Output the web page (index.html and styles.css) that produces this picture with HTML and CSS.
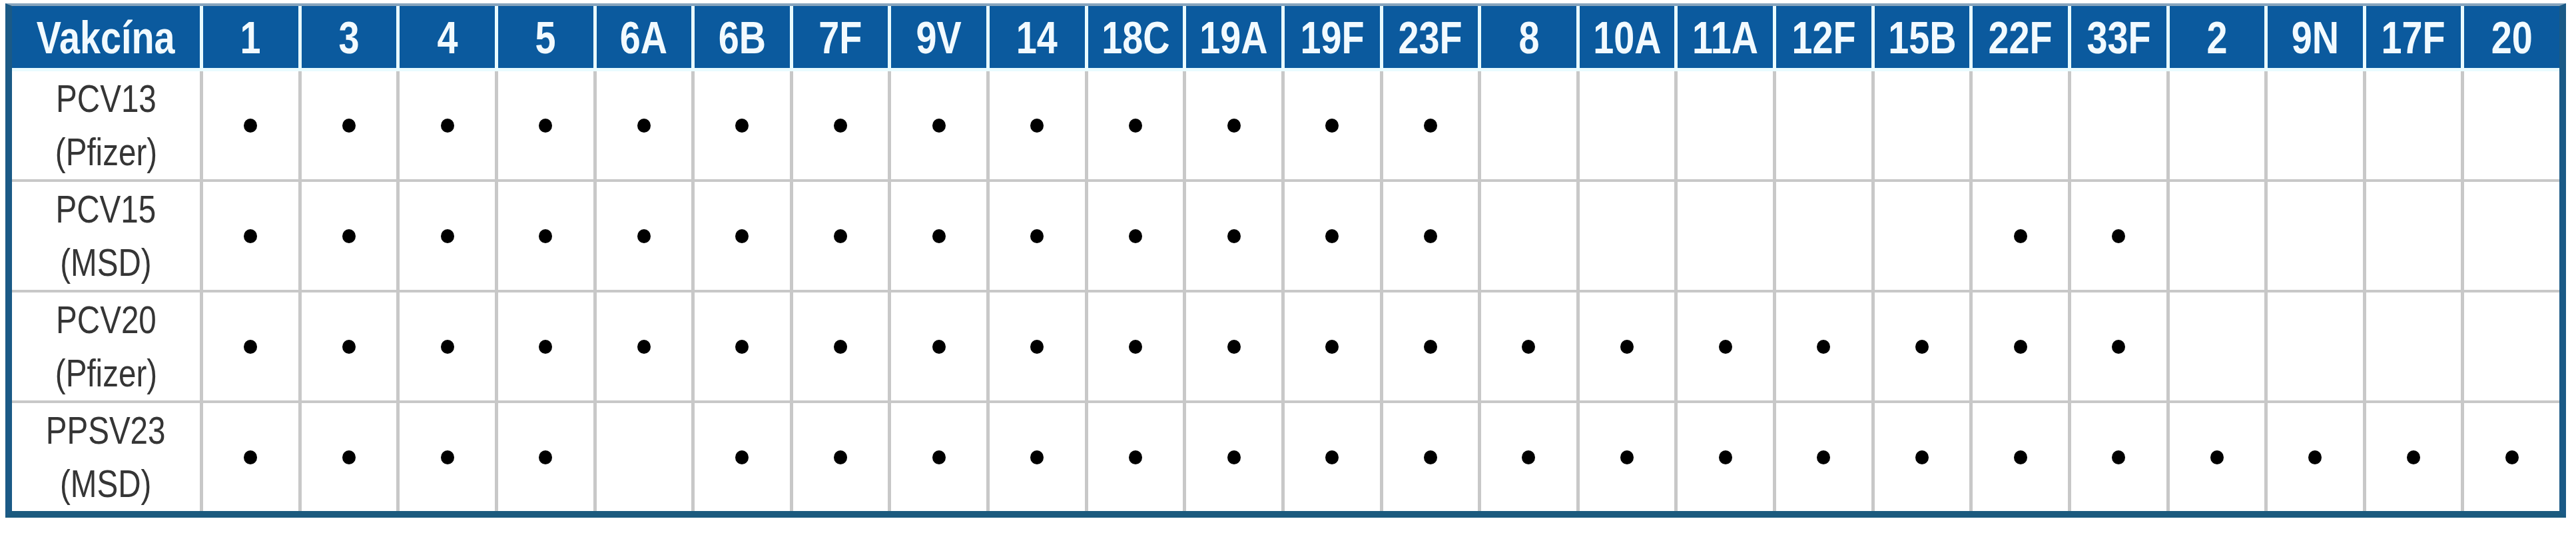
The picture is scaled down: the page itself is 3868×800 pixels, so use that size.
FILE: index.html
```html
<!DOCTYPE html>
<html lang="cs">
<head>
<meta charset="utf-8">
<title>Vakcína</title>
<link rel="stylesheet" href="styles.css">
</head>
<body>
<div class="table">
  <div class="head">
    <div class="hc"><span class="t">Vakcína</span></div>
    <div class="hc"><span class="t">1</span></div><div class="hc"><span class="t">3</span></div><div class="hc"><span class="t">4</span></div><div class="hc"><span class="t">5</span></div>
    <div class="hc"><span class="t">6A</span></div><div class="hc"><span class="t">6B</span></div><div class="hc"><span class="t">7F</span></div><div class="hc"><span class="t">9V</span></div>
    <div class="hc"><span class="t">14</span></div><div class="hc"><span class="t">18C</span></div><div class="hc"><span class="t">19A</span></div><div class="hc"><span class="t">19F</span></div>
    <div class="hc"><span class="t">23F</span></div><div class="hc"><span class="t">8</span></div><div class="hc"><span class="t">10A</span></div><div class="hc"><span class="t">11A</span></div>
    <div class="hc"><span class="t">12F</span></div><div class="hc"><span class="t">15B</span></div><div class="hc"><span class="t">22F</span></div><div class="hc"><span class="t">33F</span></div>
    <div class="hc"><span class="t">2</span></div><div class="hc"><span class="t">9N</span></div><div class="hc"><span class="t">17F</span></div><div class="hc"><span class="t">20</span></div>
  </div>
  <div class="body">
    <div class="row">
      <div class="name"><span class="t">PCV13<br>(Pfizer)</span></div>
      <div class="c"><i></i></div><div class="c"><i></i></div><div class="c"><i></i></div><div class="c"><i></i></div>
      <div class="c"><i></i></div><div class="c"><i></i></div><div class="c"><i></i></div><div class="c"><i></i></div>
      <div class="c"><i></i></div><div class="c"><i></i></div><div class="c"><i></i></div><div class="c"><i></i></div>
      <div class="c"><i></i></div><div class="c"></div><div class="c"></div><div class="c"></div>
      <div class="c"></div><div class="c"></div><div class="c"></div><div class="c"></div>
      <div class="c"></div><div class="c"></div><div class="c"></div><div class="c"></div>
    </div>
    <div class="row">
      <div class="name"><span class="t">PCV15<br>(MSD)</span></div>
      <div class="c"><i></i></div><div class="c"><i></i></div><div class="c"><i></i></div><div class="c"><i></i></div>
      <div class="c"><i></i></div><div class="c"><i></i></div><div class="c"><i></i></div><div class="c"><i></i></div>
      <div class="c"><i></i></div><div class="c"><i></i></div><div class="c"><i></i></div><div class="c"><i></i></div>
      <div class="c"><i></i></div><div class="c"></div><div class="c"></div><div class="c"></div>
      <div class="c"></div><div class="c"></div><div class="c"><i></i></div><div class="c"><i></i></div>
      <div class="c"></div><div class="c"></div><div class="c"></div><div class="c"></div>
    </div>
    <div class="row">
      <div class="name"><span class="t">PCV20<br>(Pfizer)</span></div>
      <div class="c"><i></i></div><div class="c"><i></i></div><div class="c"><i></i></div><div class="c"><i></i></div>
      <div class="c"><i></i></div><div class="c"><i></i></div><div class="c"><i></i></div><div class="c"><i></i></div>
      <div class="c"><i></i></div><div class="c"><i></i></div><div class="c"><i></i></div><div class="c"><i></i></div>
      <div class="c"><i></i></div><div class="c"><i></i></div><div class="c"><i></i></div><div class="c"><i></i></div>
      <div class="c"><i></i></div><div class="c"><i></i></div><div class="c"><i></i></div><div class="c"><i></i></div>
      <div class="c"></div><div class="c"></div><div class="c"></div><div class="c"></div>
    </div>
    <div class="row">
      <div class="name"><span class="t">PPSV23<br>(MSD)</span></div>
      <div class="c"><i></i></div><div class="c"><i></i></div><div class="c"><i></i></div><div class="c"><i></i></div>
      <div class="c"></div><div class="c"><i></i></div><div class="c"><i></i></div><div class="c"><i></i></div>
      <div class="c"><i></i></div><div class="c"><i></i></div><div class="c"><i></i></div><div class="c"><i></i></div>
      <div class="c"><i></i></div><div class="c"><i></i></div><div class="c"><i></i></div><div class="c"><i></i></div>
      <div class="c"><i></i></div><div class="c"><i></i></div><div class="c"><i></i></div><div class="c"><i></i></div>
      <div class="c"><i></i></div><div class="c"><i></i></div><div class="c"><i></i></div><div class="c"><i></i></div>
    </div>
  </div>
</div>
</body>
</html>
```
FILE: styles.css
```css
html, body {
  margin: 0;
  padding: 0;
  background: #ffffff;
}

body {
  padding: 5px 0 0 8px;
}

.table {
  width: 3825px;
  border-left: 10px solid #1b5a86;
  border-right: 10px solid #1b5a86;
  border-bottom: 10px solid #1b5a7e;
  border-top: 4px solid #86a4bd;
  background: #e9fbff;
}

.head,
.row {
  display: grid;
  grid-template-columns: 282px repeat(24, 1fr);
  column-gap: 5px;
}

.head {
  height: 93px;
  margin-bottom: 5px;
}

.hc {
  background: #0b5a9e;
  color: #f2faff;
  font-family: "Liberation Sans", Arial, sans-serif;
  font-weight: bold;
  font-size: 68px;
  display: flex;
  align-items: center;
  justify-content: center;
  white-space: nowrap;
}

.t {
  display: inline-block;
  transform: scaleX(0.82);
}

.body {
  display: flex;
  flex-direction: column;
  row-gap: 4px;
  background: #c8c8c8;
}

.row {
  height: 162px;
  background: #c8c8c8;
}

.name,
.c {
  background: #ffffff;
  display: flex;
  align-items: center;
  justify-content: center;
}

.name {
  font-family: "Liberation Sans", Arial, sans-serif;
  font-size: 58px;
  line-height: 80px;
  color: #353535;
  text-align: center;
  white-space: nowrap;
}

.c i {
  display: block;
  width: 20px;
  height: 21px;
  border-radius: 50%;
  background: #000000;
}
```
